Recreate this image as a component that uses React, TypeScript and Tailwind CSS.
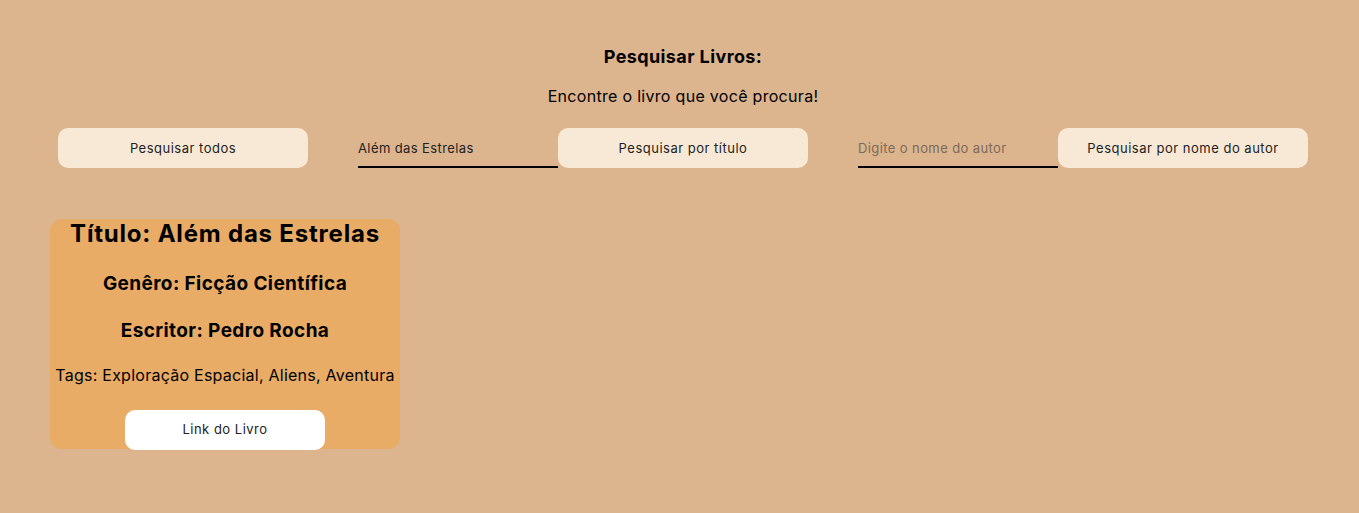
import React from "react";

export default function App() {
  const font = { fontFamily: "Inter, 'Noto Sans', sans-serif" };
  return (
    <div className="w-[1359px] h-[513px] bg-[#dcb48e] text-black overflow-hidden" style={font}>
      <div className="w-[1250px] ml-[58px] flex flex-col">
        <h1 className="mt-[45px] text-center text-[18px] font-bold leading-[24px] tracking-[0.4px]">Pesquisar Livros:</h1>
        <p className="mt-[17px] text-center text-[16px] leading-[20px] tracking-[0.3px]">Encontre o livro que você procura!</p>
        <div className="mt-[22px] flex items-start gap-[50px]">
          <button className="w-[250px] h-[40px] pt-[1px] rounded-[10px] bg-[#f8e9d6] text-[13px] tracking-[0.5px] text-[#222]">Pesquisar todos</button>
          <div className="flex">
            <div className="w-[200px] h-[40px] border-b-2 border-black flex items-center pt-[3px] text-[13px] tracking-[0.4px] text-[#222]">Além das Estrelas</div>
            <button className="w-[250px] h-[40px] pt-[1px] rounded-[10px] bg-[#f8e9d6] text-[13px] tracking-[0.5px] text-[#222]">Pesquisar por título</button>
          </div>
          <div className="flex">
            <div className="w-[200px] h-[40px] border-b-2 border-black flex items-center pt-[3px] text-[13px] tracking-[0.4px] text-[#7d6a58]">Digite o nome do autor</div>
            <button className="w-[250px] h-[40px] pt-[1px] rounded-[10px] bg-[#f8e9d6] text-[13px] tracking-[0.5px] text-[#222]">Pesquisar por nome do autor</button>
          </div>
        </div>
      </div>
      <div className="mt-[51px] ml-[50px] w-[350px] h-[230px] rounded-[12px] bg-[#e8ac66] flex flex-col items-center">
        <h2 className="mt-0 text-[24px] font-bold leading-[30px] tracking-[0.8px]">Título: Além das Estrelas</h2>
        <h3 className="mt-[23px] text-[19px] font-bold leading-[24px] tracking-[0.4px]">Genêro: Ficção Científica</h3>
        <h3 className="mt-[23px] text-[19px] font-bold leading-[24px] tracking-[0.4px]">Escritor: Pedro Rocha</h3>
        <p className="mt-[22px] text-[16px] leading-[20px] tracking-[0.25px]">Tags: Exploração Espacial, Aliens, Aventura</p>
        <button className="mt-[25px] shrink-0 w-[200px] h-[40px] rounded-[10px] bg-white text-[13px] tracking-[0.5px] text-[#222]">Link do Livro</button>
      </div>
    </div>
  );
}
